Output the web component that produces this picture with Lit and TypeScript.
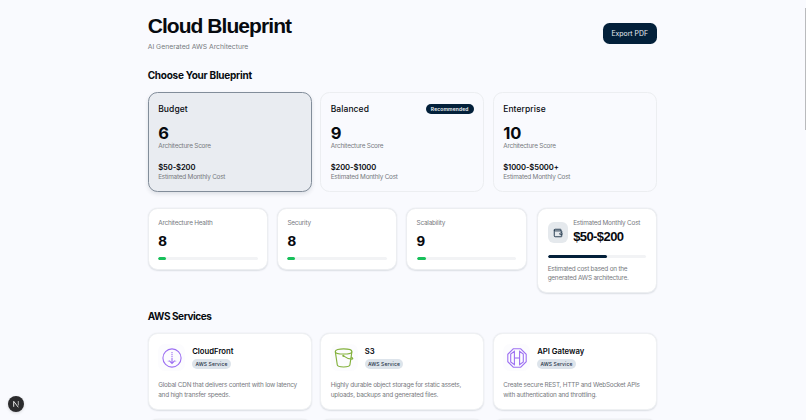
import { LitElement, html, css, svg } from "lit";
import { customElement } from "lit/decorators.js";
import { classMap } from "lit/directives/class-map.js";
import { styleMap } from "lit/directives/style-map.js";

const plans = [
  { name: "Budget", score: 6, cost: "$50-$200", selected: true, recommended: false },
  { name: "Balanced", score: 9, cost: "$200-$1000", selected: false, recommended: true },
  { name: "Enterprise", score: 10, cost: "$1000-$5000+", selected: false, recommended: false },
];

const metrics = [
  { label: "Architecture Health", value: 8 },
  { label: "Security", value: 8 },
  { label: "Scalability", value: 9 },
];

const cloudFrontIcon = svg`
  <g stroke="#9d70f2" stroke-width="1.1">
    <circle cx="10" cy="10" r="9.1"/>
    <path d="M10 4v7" stroke-dasharray="1.3 .7"/>
    <path d="M10 11v4.3M7.2 12.7l2.8 2.8 2.8-2.8"/>
    <path d="M6.3 12.6v1.2M13.7 12.6v1.2" stroke-width=".6"/>
  </g>`;

const bucketIcon = svg`
  <g stroke="#83b13c" stroke-width="1.15">
    <ellipse cx="9.6" cy="3.4" rx="8.3" ry="2.6"/>
    <path d="M1.3 3.6l2 13.4c.2 2.6 12.4 2.6 12.6 0l2-13.4"/>
    <path d="M9.4 7.9c2.2 1.7 6 3.2 8.6 3.2 1.3 0 .9-1.1-1-2"/>
    <circle cx="9.3" cy="7.8" r=".5"/>
  </g>`;

const gatewayIcon = svg`
  <g stroke="#9d70f2" stroke-width="1.1">
    <path d="M6.3.8h7.4l5.5 5.5v7.4l-5.5 5.5H6.3L.8 13.7V6.3z"/>
    <path d="M7.4 3.3v13.4L3.7 14V6zM12.6 3.3v13.4l3.7-2.7V6z"/>
    <path d="M7.4 10h5.2"/>
  </g>`;

const services = [
  {
    name: "CloudFront",
    icon: cloudFrontIcon,
    lines: ["Global CDN that delivers content with low latency", "and high transfer speeds."],
  },
  {
    name: "S3",
    icon: bucketIcon,
    lines: ["Highly durable object storage for static assets,", "uploads, backups and generated files."],
  },
  {
    name: "API Gateway",
    icon: gatewayIcon,
    lines: ["Create secure REST, HTTP and WebSocket APIs", "with authentication and throttling."],
  },
];

@customElement("app-root")
export class AppRoot extends LitElement {
  static styles = css`
    :host {
      display: block;
      position: relative;
      box-sizing: border-box;
      height: 420px;
      overflow: hidden;
      background: #f9fafe;
      color: #070a0f;
      font-family: Inter, "Liberation Sans", sans-serif;
      white-space: nowrap;
    }
    * { box-sizing: border-box; }
    main { width: 509px; margin-left: 147.7px; padding-top: 16px; }
    header { display: flex; justify-content: space-between; height: 51px; }
    h1, h2, h3, p { margin: 0; }
    h1 {
      font: 700 21px/20px "Liberation Sans", Arial, sans-serif;
      letter-spacing: -0.94px;
    }
    .subtitle { margin-top: 6px; font-size: 6.8px; line-height: 10px; color: #777a80; }
    .export {
      width: 54px; height: 21px; margin-top: 7.3px; padding: 0;
      border: 0; border-radius: 6.5px; background: #03203a; color: #e9eef4;
      font: 400 6.9px/21px Inter, sans-serif; letter-spacing: 0;
    }
    h2 {
      font: 700 10px/16px Inter, "Liberation Sans", sans-serif;
      letter-spacing: -0.25px;
    }
    .h-services { letter-spacing: -0.42px; margin-top: 15.4px; }
    .grid { display: grid; grid-template-columns: repeat(3, 1fr); gap: 8.5px; }
    .card { border: 1px solid #eceef1; border-radius: 9.5px; padding: 0 9.5px; }
    .plans { margin-top: 9.4px; }
    .plan { height: 99.3px; padding-top: 9.5px; }
    .plan.selected {
      border-color: #828d9a; background: #e9ecf1;
      box-shadow: 0 2px 4px rgba(15, 30, 50, .12);
    }
    .plan-head { display: flex; justify-content: space-between; align-items: center; height: 12px; }
    h3 { font-size: 8.5px; line-height: 12px; font-weight: 500; letter-spacing: 0.08px; }
    .badge {
      width: 48px; height: 10.5px; border-radius: 6px; text-align: center;
      background: #03203a; color: #f2f5f8; font-size: 5px; line-height: 10.5px;
      font-weight: 600; letter-spacing: 0.12px;
    }
    .score { margin-top: 8.3px; font-size: 16.5px; line-height: 20px; font-weight: 700; }
    .muted { font-size: 6.4px; line-height: 9px; color: #777a80; letter-spacing: -0.21px; }
    .score + .muted { margin-top: -0.8px; }
    .cost { margin-top: 10.6px; font-size: 7.6px; line-height: 11px; font-weight: 600; letter-spacing: -0.09px; }
    .metrics {
      display: grid; grid-template-columns: 120.5px 120.5px 120.5px 121.4px;
      column-gap: 8.7px; align-items: start; margin-top: 16.6px;
    }
    .panel { background: #fff; box-shadow: 0 .5px 1.5px rgba(15, 30, 50, .12); }
    .metric { height: 62px; padding-top: 10.2px; }
    .value { margin-top: 4.6px; font: 700 15.5px/16px "Liberation Sans", Arial, sans-serif; }
    .track { height: 3px; margin-top: 7.7px; border-radius: 2px; background: #f2f3f5; overflow: hidden; }
    .fill { height: 100%; border-radius: 2px; background: #17c05a; }
    .estimate { height: 84.3px; margin-left: 1.9px; padding-top: 10.2px; }
    .estimate .fill { background: #03203a; }
    .estimate-head { display: flex; gap: 5px; height: 31px; }
    .wallet {
      display: flex; align-items: center; justify-content: center;
      width: 20.5px; height: 20.5px; margin-top: 2.8px; border-radius: 6px; background: #e5e9ed;
    }
    .estimate-cost {
      margin-top: 1.6px; font: 700 13px/14px "Liberation Sans", Arial, sans-serif;
      letter-spacing: -0.58px;
    }
    .estimate .track { margin-top: 4.6px; }
    .note { margin-top: 7.3px; letter-spacing: -0.22px; }
    .services { margin-top: 9.4px; row-gap: 8.6px; }
    .service { height: 77px; padding-top: 9.9px; border-color: #eff1f3; }
    .service-head { display: flex; gap: 7px; height: 27px; }
    .logo {
      display: flex; align-items: center; justify-content: center;
      width: 27px; height: 27px; border-radius: 7px; background: #fcfcfe;
    }
    .name { font-size: 7.7px; line-height: 11px; margin-top: 2px; font-weight: 600; letter-spacing: 0; }
    .tag {
      width: 38.5px; height: 10px; margin-top: 2px; border-radius: 5px; text-align: center;
      background: #dde4eb; color: #1f3347; font-size: 5px; line-height: 10px;
      font-weight: 500; letter-spacing: 0.1px;
    }
    .description { margin-top: 8.8px; line-height: 10.2px; }
    svg { display: block; fill: none; }
    .dev {
      position: absolute; left: 8px; top: 396px; width: 16px; height: 16px;
      border-radius: 50%; background: #2b2b2d;
      box-shadow: 0 1px 3px rgba(0, 0, 0, .15);
    }
    .scroll { position: absolute; right: 0; top: 8px; width: 1px; height: 122px; background: #b9babd; }
  `;

  render() {
    return html`
      <main>
        <header>
          <div>
            <h1>Cloud Blueprint</h1>
            <p class="subtitle">AI Generated AWS Architecture</p>
          </div>
          <button class="export">Export PDF</button>
        </header>

        <h2>Choose Your Blueprint</h2>
        <section class="grid plans">
          ${plans.map((p) => html`
            <article class=${classMap({ card: true, plan: true, selected: p.selected })}>
              <div class="plan-head">
                <h3>${p.name}</h3>
                ${p.recommended ? html`<span class="badge">Recommended</span>` : null}
              </div>
              <p class="score">${p.score}</p>
              <p class="muted">Architecture Score</p>
              <p class="cost">${p.cost}</p>
              <p class="muted">Estimated Monthly Cost</p>
            </article>`)}
        </section>

        <section class="metrics">
          ${metrics.map((m) => html`
            <article class="card panel metric">
              <p class="muted">${m.label}</p>
              <p class="value">${m.value}</p>
              <div class="track"><div class="fill" style=${styleMap({ width: `${m.value}%` })}></div></div>
            </article>`)}
          <article class="card panel estimate">
            <div class="estimate-head">
              <div class="wallet">
                <svg width="10" height="10" viewBox="0 0 24 24" stroke="#1b3247" stroke-width="2.2" stroke-linecap="round" stroke-linejoin="round">
                  <path d="M19 7V4a1 1 0 0 0-1-1H5a2 2 0 0 0 0 4h15a1 1 0 0 1 1 1v4h-3a2 2 0 0 0 0 4h3a1 1 0 0 0 1-1v-2a1 1 0 0 0-1-1"/>
                  <path d="M3 5v14a2 2 0 0 0 2 2h15a1 1 0 0 0 1-1v-4"/>
                </svg>
              </div>
              <div>
                <p class="muted">Estimated Monthly Cost</p>
                <p class="estimate-cost">$50-$200</p>
              </div>
            </div>
            <div class="track"><div class="fill" style=${styleMap({ width: "60%" })}></div></div>
            <p class="muted note">Estimated cost based on the<br />generated AWS architecture.</p>
          </article>
        </section>

        <h2 class="h-services">AWS Services</h2>
        <section class="grid services">
          ${services.map((s) => html`
            <article class="card panel service">
              <div class="service-head">
                <div class="logo"><svg width="20" height="20" viewBox="0 0 20 20">${s.icon}</svg></div>
                <div>
                  <p class="name">${s.name}</p>
                  <div class="tag">AWS Service</div>
                </div>
              </div>
              <p class="muted description">${s.lines[0]}<br />${s.lines[1]}</p>
            </article>`)}
          ${services.map(() => html`<article class="card panel service"></article>`)}
        </section>
      </main>
      <div class="dev">
        <svg width="16" height="16" viewBox="0 0 16 16" stroke-width="1">
          <path d="M5.7 10.8V5.3l4.6 6" stroke="#e4e4e4"/>
          <path d="M10.3 5v4.4" stroke="#b5b5b5"/>
        </svg>
      </div>
      <div class="scroll"></div>
    `;
  }
}
